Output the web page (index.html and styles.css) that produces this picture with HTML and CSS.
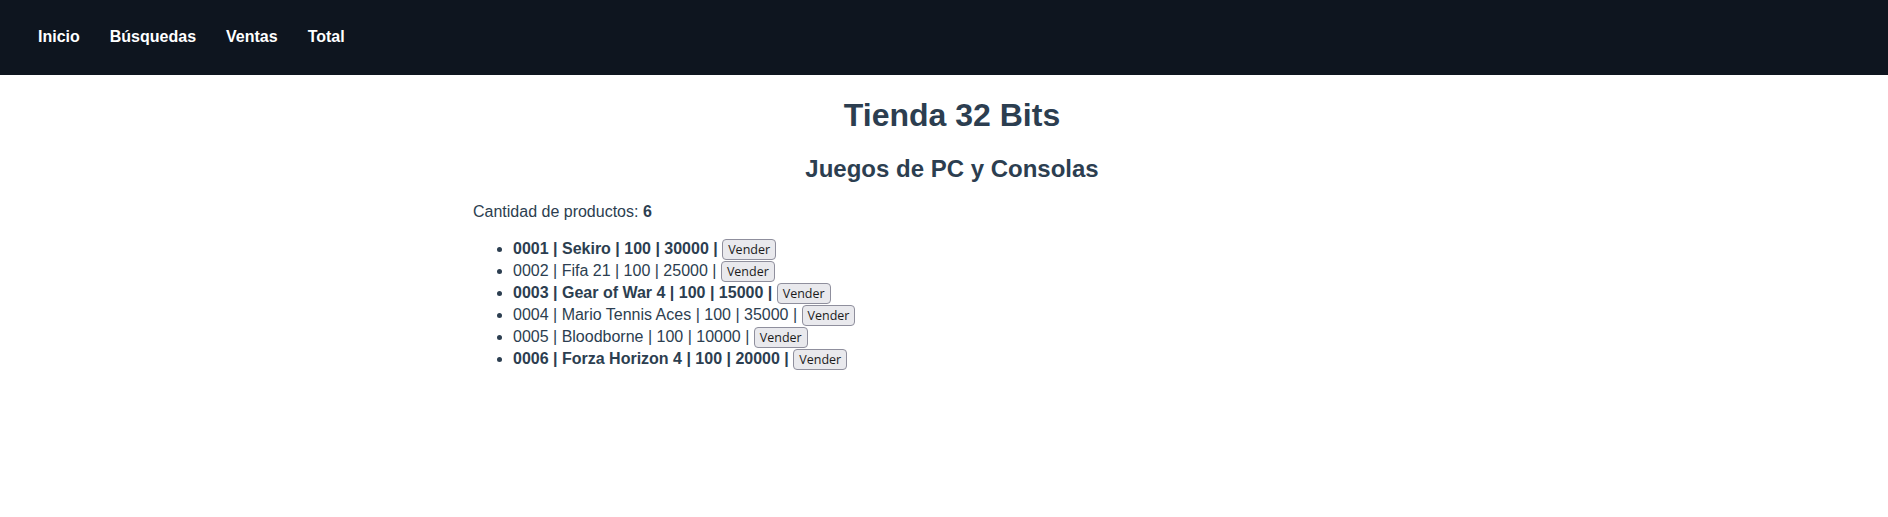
FILE: index.html
```html
<!DOCTYPE html>
<html lang="es">
<head>
<meta charset="utf-8">
<title>Tienda 32 Bits</title>
<link rel="stylesheet" href="styles.css">
</head>
<body>
<header class="topbar">
  <nav class="nav">
    <a class="nav-link" href="#">Inicio</a>
    <a class="nav-link" href="#">Búsquedas</a>
    <a class="nav-link" href="#">Ventas</a>
    <a class="nav-link" href="#">Total</a>
  </nav>
</header>
<div class="page">
  <main class="content">
    <h1 class="title">Tienda 32 Bits</h1>
    <h2 class="subtitle">Juegos de PC y Consolas</h2>
    <p class="count">Cantidad de productos: <strong>6</strong></p>
    <ul class="products">
      <li class="product bold">0001 | Sekiro | 100 | 30000 | <button class="btn">Vender</button></li>
      <li class="product">0002 | Fifa 21 | 100 | 25000 | <button class="btn">Vender</button></li>
      <li class="product bold">0003 | Gear of War 4 | 100 | 15000 | <button class="btn">Vender</button></li>
      <li class="product">0004 | Mario Tennis Aces | 100 | 35000 | <button class="btn">Vender</button></li>
      <li class="product">0005 | Bloodborne | 100 | 10000 | <button class="btn">Vender</button></li>
      <li class="product bold">0006 | Forza Horizon 4 | 100 | 20000 | <button class="btn">Vender</button></li>
    </ul>
  </main>
</div>
</body>
</html>
```
FILE: styles.css
```css
html, body {
  margin: 0;
  padding: 0;
  background: #ffffff;
}
body {
  font-family: "Liberation Sans", Arial, Helvetica, sans-serif;
  color: #2c3e50;
  font-size: 16px;
}
.topbar {
  background: #0e151f;
  height: 75px;
  display: flex;
  align-items: center;
  padding: 0 0 2px 23px;
  box-sizing: border-box;
}
.nav {
  display: flex;
}
.nav-link {
  color: #ffffff;
  font-weight: bold;
  text-decoration: none;
  padding: 0 15px;
  font-size: 16px;
}
.page {
  padding-left: 16px;
}
.content {
  width: 958px;
  margin: 0 auto;
}
.title {
  font-size: 32px;
  margin: 22px 0 21.44px;
  text-align: center;
}
.subtitle {
  font-size: 24px;
  margin: 19.92px 0;
  text-align: center;
}
.count {
  margin: 16px 0;
}
.products {
  margin: 18px 0 16px;
  padding-left: 40px;
}
.product {
  height: 22px;
  display: list-item;
}
.product.bold {
  font-weight: bold;
}
.btn {
  font-family: "Open Sans", "Noto Sans", sans-serif;
  font-weight: normal;
  font-size: 12.5px;
  color: #1b1b1b;
  background: #e9e9ed;
  border: 1px solid #8f8f9d;
  border-radius: 4px;
  padding: 1px 5px;
  line-height: 17px;
  margin: 0;
}
```
